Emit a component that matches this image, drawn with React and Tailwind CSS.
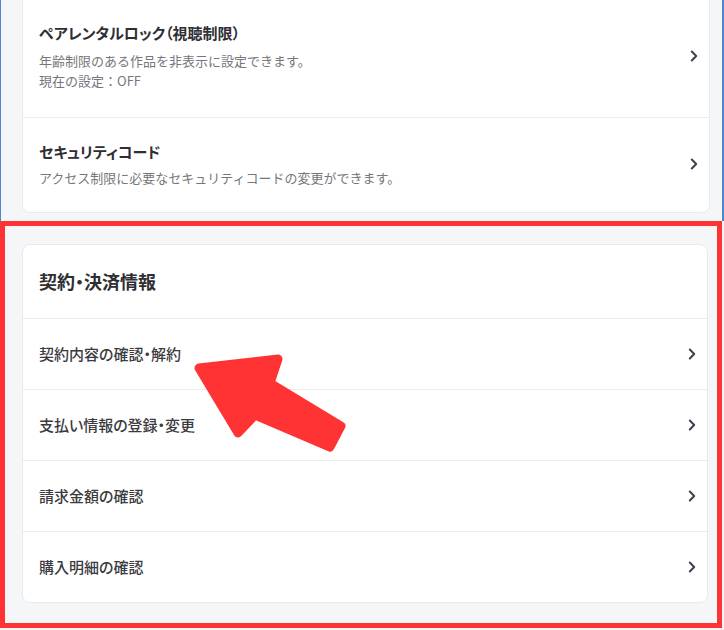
import React from "react";

const font = { fontFamily: '"Noto Sans CJK JP", "Noto Sans", sans-serif' };

function Chevron() {
  return (
    <svg width="8" height="12" viewBox="0 0 8 12" fill="none" className="shrink-0">
      <path d="M1.8 1.5 L6.2 6 L1.8 10.5" stroke="#3b4250" strokeWidth="2" strokeLinecap="round" strokeLinejoin="round" />
    </svg>
  );
}

function SettingRow({ title, lines, gap, className = "" }) {
  return (
    <div className={"flex items-center justify-between pl-4 pr-[11px] border-b border-[#ececee] last:border-b-0 " + className}>
      <div>
        <p className="text-[15px] leading-[22px] font-bold text-[#2e2e33] [font-feature-settings:'palt']">{title}</p>
        <div className={gap}>
          {lines.map((l) => (
            <p key={l} className="text-[13px] leading-[20px] text-[#76767c]">{l}</p>
          ))}
        </div>
      </div>
      <Chevron />
    </div>
  );
}

function LinkRow({ label }) {
  return (
    <div className="h-[71px] flex items-center justify-between pl-4 pr-[11px] border-t border-[#ececee]">
      <p className="text-[15px] font-medium text-[#3a3a40] [font-feature-settings:'palt']">{label}</p>
      <Chevron />
    </div>
  );
}

export default function App() {
  return (
    <div className="relative w-[724px] h-[630px] overflow-hidden bg-[#f5f6f8]" style={font}>
      <div className="h-[221px] border-l border-r-2 border-[#4c87cc] pl-[21px] pr-[12px]">
        <div className="bg-white rounded-b-lg border border-t-0 border-[#e9eaee]">
          <SettingRow
            className="h-[118px] pb-[5px]"
            gap="mt-[7px]"
            title="ペアレンタルロック（視聴制限）"
            lines={["年齢制限のある作品を非表示に設定できます。", "現在の設定：OFF"]}
          />
          <SettingRow
            className="h-[94px] pb-[2px]"
            gap="mt-[5px]"
            title="セキュリティコード"
            lines={["アクセス制限に必要なセキュリティコードの変更ができます。"]}
          />
        </div>
      </div>

      <div className="w-[722px] h-[407px] border-[5px] border-[#ff3333] pt-[18px] pl-[17px] pr-[9px]">
        <div className="bg-white rounded-lg border border-[#e9eaee]">
          <div className="h-[73px] flex items-center pl-4">
            <h2 className="text-[18px] font-bold text-[#2e2e33] [font-feature-settings:'palt']">契約・決済情報</h2>
          </div>
          <LinkRow label="契約内容の確認・解約" />
          <LinkRow label="支払い情報の登録・変更" />
          <LinkRow label="請求金額の確認" />
          <LinkRow label="購入明細の確認" />
        </div>
      </div>

      <svg className="absolute left-0 top-0 pointer-events-none" width="724" height="630" viewBox="0 0 724 630">
        <polygon
          points="199,368 278,359 270,383 341,426 330,447 255,415 238,433"
          fill="#ff3333"
          stroke="#ff3333"
          strokeWidth="9"
          strokeLinejoin="round"
        />
      </svg>
    </div>
  );
}
